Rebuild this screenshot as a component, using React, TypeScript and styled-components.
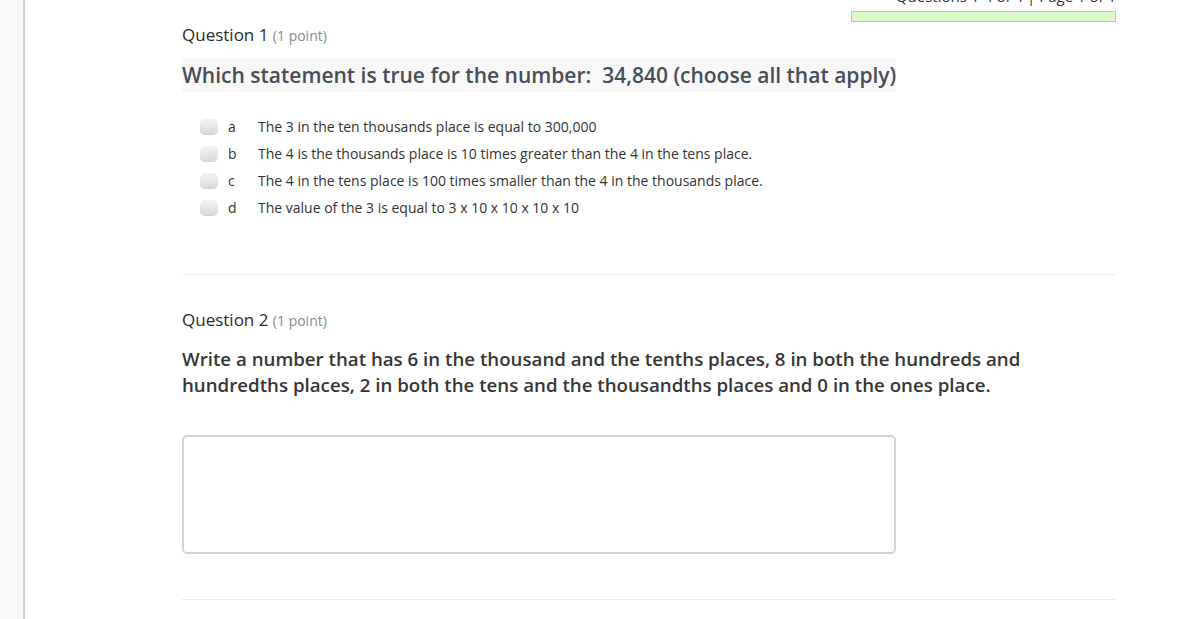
import styled, { createGlobalStyle } from "styled-components";

const GlobalStyle = createGlobalStyle`
  html, body {
    margin: 0;
    padding: 0;
    background: #ffffff;
    font-family: "Open Sans", "Liberation Sans", sans-serif;
    overflow: hidden;
  }
`;

const options = [
  { key: "a", text: "The 3 in the ten thousands place is equal to 300,000" },
  {
    key: "b",
    text: "The 4 is the thousands place is 10 times greater than the 4 in the tens place.",
  },
  {
    key: "c",
    text: "The 4 in the tens place is 100 times smaller than the 4 in the thousands place.",
  },
  { key: "d", text: "The value of the 3 is equal to 3 x 10 x 10 x 10 x 10" },
];

export default function App() {
  return (
    <Page>
      <GlobalStyle />
      <Sidebar />
      <Main>
        <Header>
          <Counter>Questions 1-4 of 4 | Page 1 of 1</Counter>
          <Progress />
        </Header>

        <Question $top={1}>
          <QuestionTitle>
            Question 1 <Points>(1 point)</Points>
          </QuestionTitle>
          <Prompt $shaded>
            Which statement is true for the number:&nbsp; 34,840 (choose all
            that apply)
          </Prompt>
          <Options>
            {options.map((o) => (
              <OptionRow key={o.key}>
                <Check />
                <OptionKey>{o.key}</OptionKey>
                <OptionText>{o.text}</OptionText>
              </OptionRow>
            ))}
          </Options>
        </Question>

        <Divider />

        <Question $top={33}>
          <QuestionTitle>
            Question 2 <Points>(1 point)</Points>
          </QuestionTitle>
          <Prompt>
            Write a number that has 6 in the thousand and the tenths places, 8
            in both the hundreds and hundredths places, 2 in both the tens and
            the thousandths places and 0 in the ones place.
          </Prompt>
          <Answer />
        </Question>

        <Divider />
      </Main>
    </Page>
  );
}

const Page = styled.div`
  display: flex;
  min-height: 619px;
`;

const Sidebar = styled.div`
  width: 23px;
  flex-shrink: 0;
  background: #f8f8f7;
  border-right: 2px solid #cfcfcf;
`;

const Main = styled.div`
  flex: 1;
  padding: 0 84px 0 157px;
`;

const Header = styled.div`
  display: flex;
  flex-direction: column;
  align-items: flex-end;
  margin-top: -14px;
`;

const Counter = styled.div`
  font-size: 15px;
  line-height: 20px;
  color: #333;
`;

const Progress = styled.div`
  width: 263px;
  height: 9px;
  margin-top: 5px;
  background: #d9f8cb;
  border: 1px solid #a9d996;
`;

const Question = styled.div<{ $top: number }>`
  display: flex;
  flex-direction: column;
  align-items: flex-start;
  padding-top: ${(p) => p.$top}px;
`;

const QuestionTitle = styled.div`
  font-size: 17px;
  line-height: 24px;
  color: #2c2c2c;
`;

const Points = styled.span`
  font-size: 14px;
  color: #8a8a8a;
`;

const Prompt = styled.div<{ $shaded?: boolean }>`
  margin-top: ${(p) => (p.$shaded ? "10px" : "13px")};
  max-width: 860px;
  font-size: ${(p) => (p.$shaded ? "21px" : "18.7px")};
  line-height: 26px;
  font-weight: 600;
  color: ${(p) => (p.$shaded ? "#464e58" : "#363636")};
  background: ${(p) => (p.$shaded ? "#f8f8f8" : "transparent")};
  padding: ${(p) => (p.$shaded ? "4px 0" : "0")};
`;

const Options = styled.div`
  display: flex;
  flex-direction: column;
  margin-top: 21px;
  padding-left: 18px;
  margin-bottom: 53px;
`;

const OptionRow = styled.div`
  display: flex;
  align-items: center;
  height: 27px;
`;

const Check = styled.span`
  width: 18px;
  height: 16px;
  border-radius: 5px;
  background: linear-gradient(#f2f2f2, #d9d9d9);
  box-shadow: inset 0 -1px 1px rgba(0, 0, 0, 0.04);
`;

const OptionKey = styled.span`
  width: 40px;
  padding-left: 10px;
  box-sizing: border-box;
  font-size: 14px;
  color: #333;
`;

const OptionText = styled.span`
  font-size: 14px;
  color: #333;
`;

const Divider = styled.div`
  height: 1px;
  background: #ececec;
`;

const Answer = styled.div`
  margin-top: 37px;
  margin-bottom: 45px;
  width: 710px;
  height: 115px;
  border: 2px solid #d4d4d4;
  border-radius: 5px;
  background: #fff;
`;
